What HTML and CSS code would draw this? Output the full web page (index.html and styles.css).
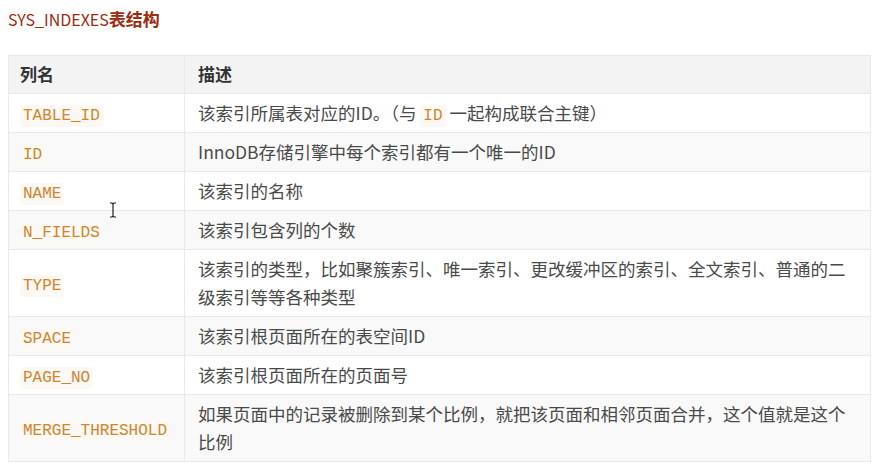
FILE: index.html
```html
<!DOCTYPE html>
<html lang="zh">
<head>
<meta charset="utf-8">
<link rel="stylesheet" href="styles.css">
</head>
<body>
<div class="page">
  <h3 class="title"><span class="title-latin">SYS_INDEXES</span><span class="title-cjk">表结构</span></h3>
  <table class="tbl">
    <thead>
      <tr><th class="c1">列名</th><th>描述</th></tr>
    </thead>
    <tbody>
      <tr><td class="c1"><code>TABLE_ID</code></td><td>该索引所属表对应的ID。（与 <code>ID</code> 一起构成联合主键）</td></tr>
      <tr class="alt"><td class="c1"><code>ID</code></td><td>InnoDB存储引擎中每个索引都有一个唯一的ID</td></tr>
      <tr><td class="c1"><code>NAME</code></td><td>该索引的名称</td></tr>
      <tr class="alt"><td class="c1"><code>N_FIELDS</code></td><td>该索引包含列的个数</td></tr>
      <tr><td class="c1"><code>TYPE</code></td><td>该索引的类型，比如聚簇索引、唯一索引、更改缓冲区的索引、全文索引、普通的二<br>级索引等等各种类型</td></tr>
      <tr class="alt"><td class="c1"><code>SPACE</code></td><td>该索引根页面所在的表空间ID</td></tr>
      <tr><td class="c1"><code>PAGE_NO</code></td><td>该索引根页面所在的页面号</td></tr>
      <tr class="alt"><td class="c1"><code>MERGE_THRESHOLD</code></td><td>如果页面中的记录被删除到某个比例，就把该页面和相邻页面合并，这个值就是这个<br>比例</td></tr>
    </tbody>
  </table>
  <svg class="cursor" width="8" height="16" viewBox="0 0 8 16"><path d="M1 1h2l1 1 1-1h2M4 2v12M1 15h2l1-1 1 1h2" fill="none" stroke="#222" stroke-width="1.2"/></svg>
</div>
</body>
</html>
```
FILE: styles.css
```css
html, body {
  margin: 0;
  padding: 0;
  background: #ffffff;
}
.page {
  position: relative;
  padding: 8px 8px 0 8px;
  width: 864px;
  font-family: "Noto Sans CJK SC", "Noto Sans", sans-serif;
  color: #4a4a4a;
}
.title {
  margin: 0;
  height: 47px;
  font-size: 17px;
  line-height: 22px;
  color: #9b2c10;
  font-weight: normal;
}
.title-latin {
  font-size: 16px;
}
.title-cjk {
  font-weight: bold;
}
.tbl {
  border-collapse: collapse;
  width: 863px;
  font-size: 17.5px;
}
.tbl th, .tbl td {
  border: 1px solid #e9e9e9;
  text-align: left;
  padding: 5px 10px 5px 13px;
  line-height: 28px;
  vertical-align: middle;
  white-space: nowrap;
}
.tbl th {
  background: #f3f3f3;
  color: #333333;
  font-weight: bold;
  font-size: 17px;
  padding-top: 4px;
  padding-bottom: 5px;
}
.tbl .c1 {
  width: 154px;
  padding-left: 11px;
}
.tbl tr.alt td {
  background: #f9f9f9;
}
code {
  font-family: "Liberation Mono", "DejaVu Sans Mono", monospace;
  font-size: 16px;
  line-height: 1;
  color: #d0852c;
  background: #fcf8f4;
  padding: 2px 3px;
  border-radius: 3px;
}
.cursor {
  position: absolute;
  left: 109px;
  top: 202px;
}
```
